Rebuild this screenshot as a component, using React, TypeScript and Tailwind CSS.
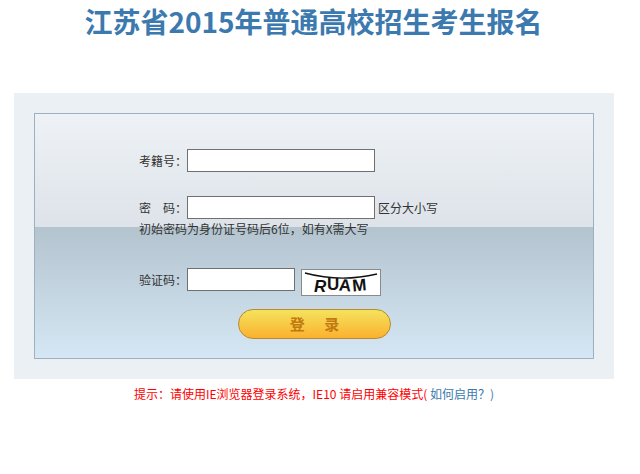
import React from "react";

const font = { fontFamily: '"Microsoft YaHei", "Noto Sans CJK SC", "Noto Sans", sans-serif' };

function Captcha() {
  return (
    <div className="ml-[6px] mt-[1px] h-[27px] w-[80px] border border-[#8a8a8a] bg-white">
      <svg width="78" height="25" viewBox="0 0 78 25">
        <g fontFamily="Liberation Sans, sans-serif" fontSize="17" fontWeight="bold" fill="#111">
          <text x="12" y="22" fontStyle="italic">R</text>
          <text x="25" y="20">U</text>
          <text x="37" y="21" transform="rotate(5 43 14)">A</text>
          <text x="50" y="21" transform="rotate(-5 57 14)">M</text>
        </g>
        <path d="M3 3 C 25 9, 50 10, 75 4" stroke="#111" strokeWidth="1.3" fill="none" />
      </svg>
    </div>
  );
}

export default function App() {
  return (
    <div className="h-[474px] w-[640px] bg-white" style={font}>
      <h1 className="pr-[13px] pt-[1px] text-center text-[28px] font-bold leading-[40px] text-[#3b79ae]">
        江苏省2015年普通高校招生考生报名
      </h1>
      <div className="mx-[14px] mt-[52px] h-[286px] w-[600px] bg-[#ebf0f4] p-[20px]">
        <div className="h-[246px] w-[560px] border border-[#9eb0c0] bg-[linear-gradient(to_bottom,#eef2f6_0px,#dde3e9_113px,#b3c4cf_113px,#d5e7f4_100%)] pl-[104px] text-[12px] text-[#333]">
          <div className="mt-[35px] flex h-[23px] items-center">
            <span className="w-[48px]">考籍号：</span>
            <div className="h-[23px] w-[188px] border border-[#707070] bg-white" />
          </div>
          <div className="mt-[24px] flex h-[23px] items-center">
            <span className="w-[48px]">密　码：</span>
            <div className="h-[23px] w-[188px] border border-[#707070] bg-white" />
            <span className="ml-[3px]">区分大小写</span>
          </div>
          <div className="mt-[2px] leading-[16px]">初始密码为身份证号码后6位，如有X需大写</div>
          <div className="mt-[31px] flex h-[29px] items-start">
            <span className="w-[48px] leading-[23px]">验证码：</span>
            <div className="h-[23px] w-[108px] border border-[#707070] bg-white" />
            <Captcha />
          </div>
          <div className="ml-[99px] mt-[12px] flex h-[30px] w-[153px] items-center justify-center rounded-full border border-[#b98a2e] bg-[linear-gradient(to_bottom,#f5e35e,#fbb12e)] text-[15px] font-bold tracking-[8px] text-[#c07a10]">
            <span className="pl-[8px]">登 录</span>
          </div>
        </div>
      </div>
      <div className="mt-[7px] pr-[12px] text-center text-[12px] leading-[16px] text-[#ff0000]">
        提示：请使用IE浏览器登录系统，IE10 请启用兼容模式(<span className="text-[#3b79ae]"> 如何启用？)</span>
      </div>
    </div>
  );
}
